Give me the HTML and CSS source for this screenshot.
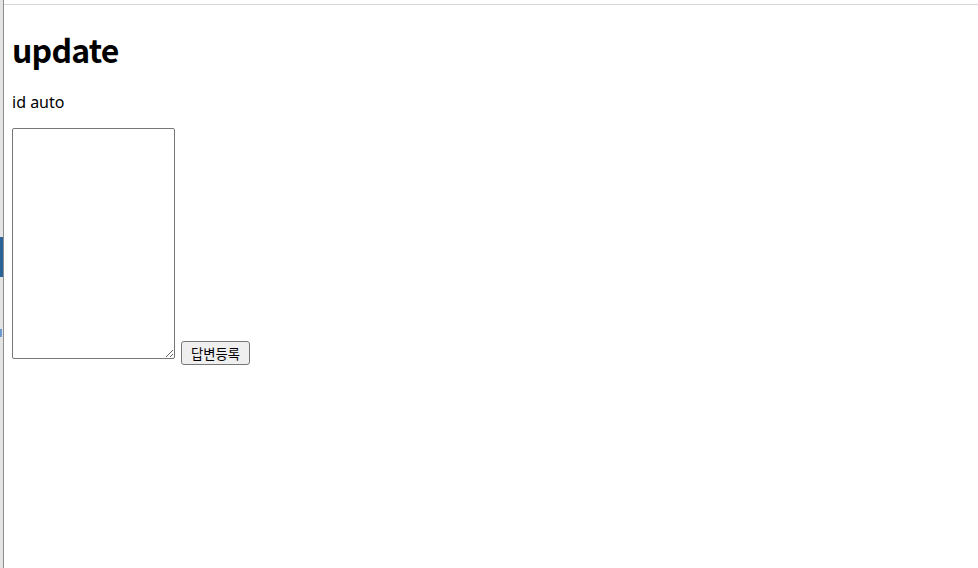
FILE: index.html
```html
<!DOCTYPE html>
<html lang="ko">
<head>
<meta charset="utf-8">
<title>update</title>
<link rel="stylesheet" href="styles.css">
</head>
<body>
<div class="frame">
  <div class="side">
    <div class="side-gap"></div>
    <div class="side-mark"></div>
    <div class="side-gap2"></div>
    <div class="side-dot"></div>
  </div>
  <div class="main">
    <h1 class="title">update</h1>
    <p class="meta">id auto</p>
    <form class="reply">
      <textarea class="reply-text"></textarea>
      <button type="button" class="reply-btn">답변등록</button>
    </form>
  </div>
</div>
</body>
</html>
```
FILE: styles.css
```css
html, body {
  margin: 0;
  padding: 0;
  height: 100%;
  background: #fff;
}
body {
  font-family: "Noto Sans", "Noto Sans CJK KR", sans-serif;
  color: #000;
}
.frame {
  display: flex;
  height: 100vh;
}
.side {
  width: 3px;
  background: #e4e4e4;
  border-right: 1px solid #8e8e8e;
  display: flex;
  flex-direction: column;
}
.side-gap { height: 237px; }
.side-mark {
  height: 40px;
  background: #2a6496;
}
.side-gap2 { height: 52px; }
.side-dot {
  height: 8px;
  width: 2px;
  background: #6a9cd0;
}
.main {
  flex: 1;
  margin-top: 4px;
  border-top: 1px solid #d6d6d6;
  padding: 0 8px;
}
.title {
  font-family: "Noto Sans CJK KR", "Noto Sans", sans-serif;
  font-size: 32px;
  font-weight: 700;
  letter-spacing: -0.8px;
  line-height: 1.3;
  margin: 24px 0 21px;
}
.meta {
  font-size: 16px;
  line-height: 1.35;
  margin: 0 0 15px;
}
.reply {
  display: flex;
  align-items: flex-end;
  gap: 6px;
}
.reply-text {
  box-sizing: border-box;
  width: 163px;
  height: 231px;
  margin: 0 0 6px;
  border: 1px solid #767676;
  border-radius: 2px;
  padding: 2px;
}
.reply-btn {
  box-sizing: border-box;
  height: 24px;
  width: 69px;
  padding: 0 6px;
  font-family: "Noto Sans CJK KR", sans-serif;
  font-size: 13.33px;
  line-height: 1;
  background: #efefef;
  border: 1px solid #767676;
  border-radius: 3px;
  color: #000;
}
```
